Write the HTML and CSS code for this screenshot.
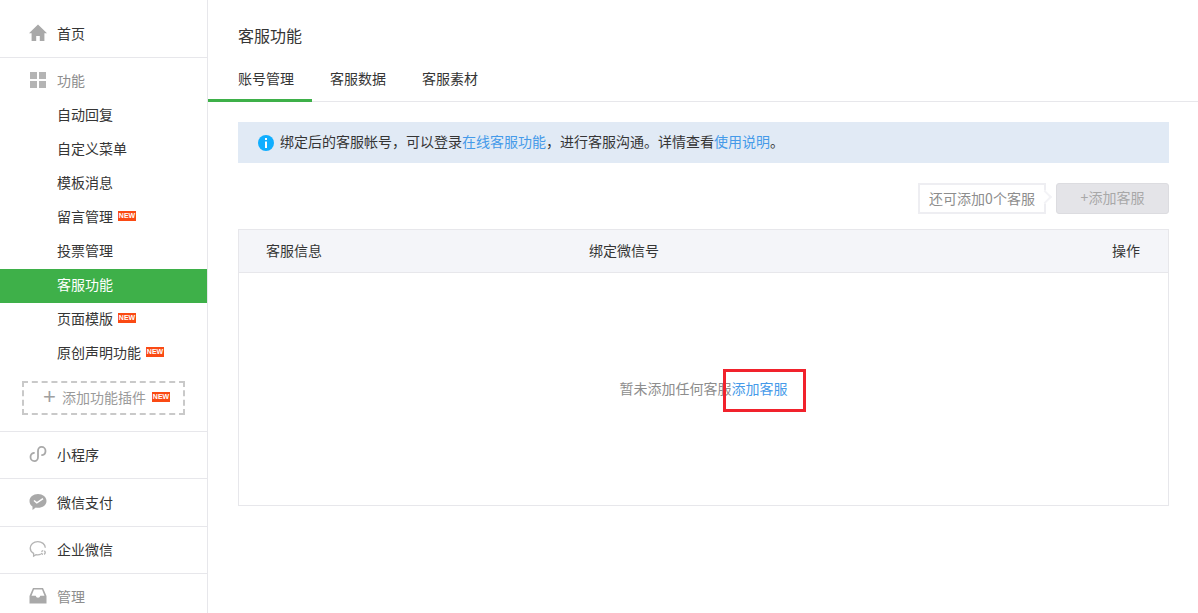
FILE: index.html
```html
<!DOCTYPE html>
<html lang="zh-CN">
<head>
<meta charset="utf-8">
<title>客服功能</title>
<link rel="stylesheet" href="styles.css">
</head>
<body>
<div class="page">
  <aside class="sidebar">
    <section class="group group-home">
      <div class="group-head dark">
        <svg class="icon" viewBox="0 0 18 18"><path d="M9 .5 0 9.200h2.600V17h4.600v-5h3.600v5h4.600V9.200H18z" fill="#a9a9a9"/></svg>
        <span>首页</span>
      </div>
    </section>
    <section class="group group-func">
      <div class="group-head muted">
        <svg class="icon" viewBox="0 0 18 18"><path d="M1 1h7v7H1zM10 1h7v7h-7zM1 10h7v7H1zM10 10h7v7h-7z" fill="#b4b4b4"/></svg>
        <span>功能</span>
      </div>
      <ul class="menu">
        <li class="item">自动回复</li>
        <li class="item">自定义菜单</li>
        <li class="item">模板消息</li>
        <li class="item">留言管理<i class="new">NEW</i></li>
        <li class="item">投票管理</li>
        <li class="item active">客服功能</li>
        <li class="item">页面模版<i class="new">NEW</i></li>
        <li class="item">原创声明功能<i class="new">NEW</i></li>
      </ul>
      <div class="add-plugin"><span class="plus">+</span>添加功能插件<i class="new">NEW</i></div>
    </section>
    <section class="group row">
      <div class="group-head dark">
        <svg class="icon" viewBox="0 0 18 18"><path d="M5 7.800C2.800 8.200 1.500 10 1.500 12c0 2.400 1.800 4.100 3.900 4.100C7.500 16.100 9 14.300 9 12V6c0-2.300 1.500-4.100 3.600-4.100 2.100 0 3.900 1.700 3.900 4.100 0 2-1.300 3.800-3.500 4.200" fill="none" stroke="#a9a9a9" stroke-width="1.800" stroke-linecap="round"/></svg>
        <span>小程序</span>
      </div>
    </section>
    <section class="group row pay">
      <div class="group-head dark">
        <svg class="icon" viewBox="0 0 18 18"><path d="M9 1c4.700 0 8.500 3 8.500 6.900s-3.800 6.900-8.500 6.900c-.8 0-1.500-.1-2.200-.2L3.500 17v-3.500C1.600 12.200.5 10.200.5 7.900.5 4 4.300 1 9 1z" fill="#a9a9a9"/><path d="m5 7.500 2.800 2.300L14 5.600" fill="none" stroke="#fff" stroke-width="1.600"/></svg>
        <span>微信支付</span>
      </div>
    </section>
    <section class="group row">
      <div class="group-head dark">
        <svg class="icon" viewBox="0 0 18 18"><path d="M11.800 14.200c-.9.400-1.900.6-3 .6-.6 0-1.200-.1-1.800-.2l-2.400 1.400v-2.600C2.600 12.300 1.200 10.300 1.200 8.100 1.200 4.400 4.600 1.600 8.800 1.600s7.300 2.700 7.500 6.100" fill="none" stroke="#b4b4b4" stroke-width="1.300"/><circle cx="14.300" cy="12.500" r="1.900" fill="none" stroke="#b4b4b4" stroke-width="1.400" stroke-dasharray="2 1"/></svg>
        <span>企业微信</span>
      </div>
    </section>
    <section class="group row last">
      <div class="group-head muted">
        <svg class="icon" viewBox="0 0 18 18"><path d="M4 1h10l3.500 8v7.500H.5V9zM5 2.400 2.500 8.700h4.200c.4 1.300 1.100 2 2.300 2s1.900-.7 2.300-2h4.200L13 2.400z" fill="#a9a9a9" fill-rule="evenodd"/></svg>
        <span>管理</span>
      </div>
    </section>
  </aside>

  <main class="content">
    <h1 class="title">客服功能</h1>
    <nav class="tabs">
      <a class="tab current">账号管理</a>
      <a class="tab">客服数据</a>
      <a class="tab">客服素材</a>
    </nav>
    <div class="body">
      <div class="notice">
        <svg class="info" viewBox="0 0 16 16"><circle cx="8" cy="8" r="8" fill="#10aeff"/><path d="M7 3h2v2H7zM7 6.500h2V13H7z" fill="#fff"/></svg>
        <span class="notice-text">绑定后的客服帐号，可以登录<a class="link">在线客服功能</a>，进行客服沟通。详情查看<a class="link">使用说明</a>。</span>
      </div>
      <div class="toolbar">
        <div class="tip">还可添加0个客服</div>
        <div class="btn">+添加客服</div>
      </div>
      <div class="table">
        <div class="thead">
          <span class="col-a">客服信息</span>
          <span class="col-b">绑定微信号</span>
          <span class="col-c">操作</span>
        </div>
        <div class="empty">
          <span class="empty-text">暂未添加任何客服<a class="link marked">添加客服</a></span>
        </div>
      </div>
    </div>
  </main>
</div>
</body>
</html>
```

FILE: styles.css
```css
*, *::before, *::after { box-sizing: border-box; }
html, body { margin: 0; padding: 0; height: 100%; overflow: hidden; background: #fff; }
body { font-family: "Noto Sans CJK SC", "Liberation Sans", sans-serif; font-size: 14px; color: #353535; }
ul { list-style: none; margin: 0; padding: 0; }
a { color: inherit; text-decoration: none; }
i { font-style: normal; }

.page { display: flex; height: 613px; }

.sidebar { width: 208px; flex: none; border-right: 1px solid #e7e7eb; overflow: hidden; }
.group { border-bottom: 1px solid #e7e7eb; }
.group-home { height: 58px; padding-top: 10px; }
.group-func { height: 374px; padding-top: 7px; }
.row { height: 47px; }
.row.pay { height: 48px; padding-top: 1px; }
.row.last { border-bottom: 0; }
.group-head { display: flex; align-items: center; height: 47px; padding: 0 0 3px 29px; }
.group-home .group-head { padding-bottom: 2px; }
.group-func .group-head { height: 33px; padding-bottom: 4px; }
.icon { width: 18px; height: 18px; margin-right: 10px; flex: none; }
.dark { color: #353535; }
.muted { color: #8d8d8d; }
.menu { padding-top: 1px; }
.item { display: flex; align-items: center; height: 34px; padding: 0 0 4px 57px; }
.item.active { background: #3eb049; color: #fff; }
.new { display: inline-block; flex: none; width: 18px; height: 10px; margin-left: 5px; background: #fa4a14; color: #fff; font: bold 7px/10px "Liberation Sans", sans-serif; text-align: center; }
.add-plugin { display: flex; align-items: center; margin: 10px 0 0 22px; width: 163px; height: 34px; padding: 0 0 2px 19px; border: 2px dashed #c9c9c9; color: #9a9a9a; }
.plus { width: 13px; margin-right: 6px; font-size: 22px; line-height: 20px; text-align: center; color: #a0a0a0; font-family: "Liberation Sans", sans-serif; }
.add-plugin .new { margin-left: 6px; }

.content { flex: 1; min-width: 0; }
.title { margin: 0; padding: 23px 0 0 30px; height: 60px; font-size: 16px; line-height: 24px; font-weight: 400; color: #353535; }
.tabs { display: flex; height: 42px; border-bottom: 1px solid #e7e7eb; }
.tab { display: block; height: 42px; padding: 6px 18px 0; line-height: 24px; color: #353535; }
.tab.current { padding-left: 30px; border-bottom: 3px solid #3eb049; }
.body { width: 931px; margin: 20px 0 0 30px; }
.notice { display: flex; align-items: center; height: 41px; padding-left: 20px; background: #e1eaf5; color: #353535; }
.notice-text { position: relative; top: -2px; }
.info { width: 16px; height: 16px; margin-right: 6px; flex: none; }
.link { color: #459ae9; }
.toolbar { display: flex; justify-content: flex-end; margin-top: 20px; }
.tip { position: relative; width: 128px; height: 31px; line-height: 27px; text-align: center; border: 2px solid #eeeef2; color: #8d8d8d; margin-right: 10px; background: #fff; }
.tip::after { content: ""; position: absolute; right: -6px; top: 7px; width: 10px; height: 10px; border-top: 2px solid #f3f3f6; border-right: 2px solid #f3f3f6; background: #fff; transform: rotate(45deg); }
.btn { width: 113px; height: 31px; line-height: 27px; text-align: center; border-radius: 3px; background: #e4e4e8; border: 1px solid #dcdce0; color: #a8a8a8; }
.table { margin-top: 15px; height: 277px; border: 1px solid #e7e7eb; }
.thead { display: flex; align-items: center; height: 43px; background: #f4f5f9; border-bottom: 1px solid #e7e7eb; padding: 0 28px 3px 27px; }
.col-a { width: 323px; }
.col-b { flex: 1; }
.empty { display: flex; justify-content: center; height: 232px; padding-top: 105px; }
.empty-text { position: relative; color: #8d8d8d; height: 20px; line-height: 20px; }
.marked::after { content: ""; position: absolute; left: 103px; top: -9px; width: 83px; height: 43px; border: 3px solid #f1222c; }
```
